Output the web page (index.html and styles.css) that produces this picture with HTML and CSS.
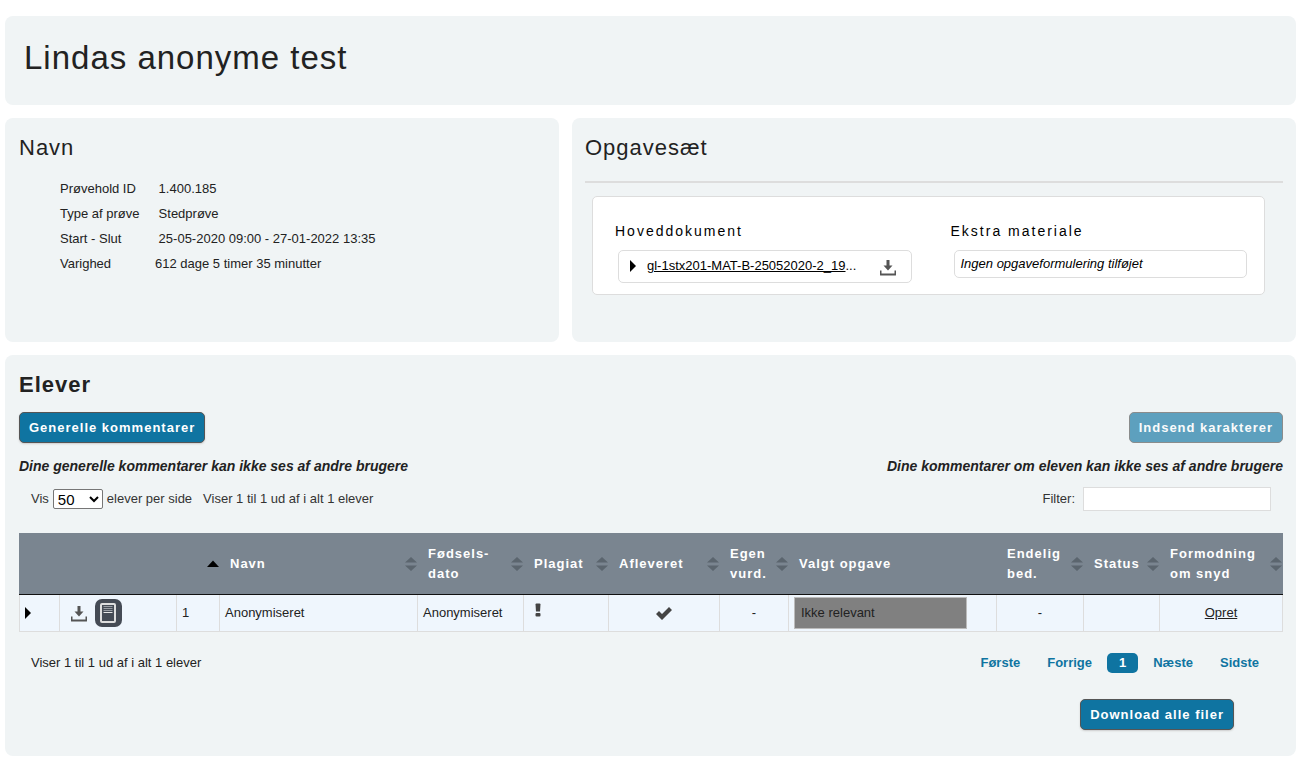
FILE: index.html
```html
<!DOCTYPE html>
<html lang="da">
<head>
<meta charset="utf-8">
<title>Lindas anonyme test</title>
<link rel="stylesheet" href="styles.css">
</head>
<body>
<svg class="sprite" width="0" height="0" aria-hidden="true">
  <symbol id="download" viewBox="0 0 16 16"><path d="M6.500 0h3v5.500H12.500L8 10.500 3.500 5.500h3z"/><path d="M0 10.500h1.500v3h13v-3H16V15q0 .5-.5.5H.5Q0 15.500 0 15z"/></symbol>
  <symbol id="expand" viewBox="0 0 6 12"><path d="M0 0l6 6-6 6z"/></symbol>
  <symbol id="sort" viewBox="0 0 12 16"><path d="M0 6.500L6 1l6 5.500zM0 9.500h12L6 15z"/></symbol>
  <symbol id="ascending" viewBox="0 0 12 16"><path d="M0 11l6-6.500L12 11z"/></symbol>
</svg>
<main class="page">
  <header class="panel title-panel"><h1 class="title">Lindas anonyme test</h1></header>

  <div class="columns">
    <section class="panel">
      <h2 class="heading">Navn</h2>
      <dl class="facts">
        <dt>Prøvehold ID</dt><dd>&nbsp;1.400.185</dd>
        <dt>Type af prøve</dt><dd>&nbsp;Stedprøve</dd>
        <dt>Start - Slut</dt><dd>&nbsp;25-05-2020 09:00 - 27-01-2022 13:35</dd>
        <dt>Varighed</dt><dd>612 dage 5 timer 35 minutter</dd>
      </dl>
    </section>
    <section class="panel">
      <h2 class="heading">Opgavesæt</h2>
      <div class="documents">
        <div>
          <h3 class="subheading">Hoveddokument</h3>
          <div class="box file">
            <svg class="expand"><use href="#expand"/></svg>
            <span class="file-name"><a href="#">gl-1stx201-MAT-B-25052020-2_19</a>...</span>
            <svg class="download"><use href="#download"/></svg>
          </div>
        </div>
        <div>
          <h3 class="subheading">Ekstra materiale</h3>
          <div class="box note">Ingen opgaveformulering tilføjet</div>
        </div>
      </div>
    </section>
  </div>

  <section class="panel">
    <h2 class="heading strong">Elever</h2>
    <div class="bar">
      <button class="button" type="button">Generelle kommentarer</button>
      <button class="button" type="button" disabled>Indsend karakterer</button>
    </div>
    <div class="bar hints">
      <p>Dine generelle kommentarer kan ikke ses af andre brugere</p>
      <p>Dine kommentarer om eleven kan ikke ses af andre brugere</p>
    </div>
    <div class="bar tools">
      <div class="length">
        <label for="length">Vis</label>
        <select id="length"><option>50</option></select>
        <span>elever per side</span>
        <span class="count">Viser 1 til 1 ud af i alt 1 elever</span>
      </div>
      <div class="filter"><label for="filter">Filter:</label><input id="filter" type="text"></div>
    </div>

    <table class="students">
      <colgroup>
        <col class="c-expand"><col class="c-actions"><col class="c-number"><col class="c-name"><col class="c-birth"><col class="c-plagiarism"><col class="c-handed"><col class="c-own"><col class="c-task"><col class="c-final"><col class="c-status"><col class="c-cheat">
      </colgroup>
      <thead>
        <tr>
          <th></th>
          <th></th>
          <th><div class="head"><span></span><svg class="sort active"><use href="#ascending"/></svg></div></th>
          <th><div class="head">Navn<svg class="sort"><use href="#sort"/></svg></div></th>
          <th><div class="head">Fødsels-<br>dato<svg class="sort"><use href="#sort"/></svg></div></th>
          <th><div class="head">Plagiat<svg class="sort"><use href="#sort"/></svg></div></th>
          <th><div class="head">Afleveret<svg class="sort"><use href="#sort"/></svg></div></th>
          <th><div class="head">Egen<br>vurd.<svg class="sort"><use href="#sort"/></svg></div></th>
          <th><div class="head">Valgt opgave</div></th>
          <th><div class="head">Endelig<br>bed.<svg class="sort"><use href="#sort"/></svg></div></th>
          <th><div class="head">Status<svg class="sort"><use href="#sort"/></svg></div></th>
          <th><div class="head">Formodning<br>om snyd<svg class="sort"><use href="#sort"/></svg></div></th>
        </tr>
      </thead>
      <tbody>
        <tr>
          <td><svg class="expand"><use href="#expand"/></svg></td>
          <td>
            <div class="actions">
              <svg class="download"><use href="#download"/></svg>
              <svg class="book" viewBox="0 0 27 28">
                <rect width="27" height="28" rx="7" fill="#454b55"/>
                <rect x="6" y="5" width="14" height="18" rx="1" fill="none" stroke="#dedede" stroke-width="2"/>
                <path d="M8.500 7.500h9M8.500 9.500h9M8.500 11.500h9" stroke="#9a9ea4"/>
                <path d="M8.500 13.500h9" stroke="#e8e8e8"/>
              </svg>
            </div>
          </td>
          <td>1</td>
          <td>Anonymiseret</td>
          <td>Anonymiseret</td>
          <td class="top"><svg class="alert" viewBox="0 0 6 14"><path d="M.5 1.500Q.5.500 1.500.500h3q1 0 1 1L5 8.500H1z"/><rect x=".5" y="10" width="5" height="3.500" rx="1"/></svg></td>
          <td class="center"><svg class="check" viewBox="0 0 16 13"><path d="M0 7l3-3 3 3 7-7 3 3L6 13z"/></svg></td>
          <td class="center">-</td>
          <td><div class="task">Ikke relevant</div></td>
          <td class="center">-</td>
          <td></td>
          <td class="center"><a href="#">Opret</a></td>
        </tr>
      </tbody>
    </table>

    <div class="bar footer">
      <span>Viser 1 til 1 ud af i alt 1 elever</span>
      <nav class="pager">
        <a href="#">Første</a><a href="#">Forrige</a><a class="current" href="#">1</a><a href="#">Næste</a><a href="#">Sidste</a>
      </nav>
    </div>
    <div class="download-all"><button class="button" type="button">Download alle filer</button></div>
  </section>
</main>
</body>
</html>
```
FILE: styles.css
```css
* { box-sizing: border-box; }
body { margin: 0; background: #fff; color: #222; font: 13px/20px "Liberation Sans", Arial, sans-serif; }
h1, h2, h3, p, dl, dd { margin: 0; }
a { color: inherit; }
svg { display: block; flex: none; }
.sprite { position: absolute; }

.page { display: flex; flex-direction: column; gap: 13px; padding: 16px 11px 9px 5px; }
.panel { min-width: 0; padding: 15px 13px 26px 14px; border-radius: 8px; background: #f0f4f5; }
.title-panel { padding: 22px 20px 27px 19px; }
.title { font-size: 33px; line-height: 40px; font-weight: 400; letter-spacing: 1px; }
.columns { display: grid; grid-template-columns: 554fr 724fr; gap: 13px; }
.columns .panel { padding-left: 13px; padding-bottom: 47px; }
.columns .panel:first-child { padding-left: 14px; }
.heading { font-size: 22px; line-height: 30px; font-weight: 400; letter-spacing: 1px; }
.strong { font-weight: 700; }

.facts { display: grid; grid-template-columns: 95px 1fr; margin: 13px 0 0 41px; line-height: 25px; }

.documents { display: grid; grid-template-columns: 1fr 1fr; margin: 33px 18px 0 7px; padding: 24px 17px 11px 22px; gap: 39px; border: 1px solid #ddd; border-radius: 5px; background: #fff; color: #000; position: relative; }
.documents::before { content: ""; position: absolute; top: -16px; left: -8px; right: -19px; height: 2px; background: #ddd; }
.subheading { font-size: 14px; line-height: 20px; font-weight: 400; letter-spacing: 2px; }
.box { margin: 9px 0 0 3px; border: 1px solid #ddd; border-radius: 5px; }
.file { display: flex; align-items: center; height: 33px; padding: 0 15px 2px 11px; }
.file-name { flex: 1; margin-left: 11px; white-space: nowrap; }
.file .download { margin-top: 4px; }
.note { padding: 3px 6px; font-style: italic; }

.expand { width: 6px; height: 12px; fill: #000; }
.download { width: 16px; height: 16px; fill: #555; }

.bar { display: flex; justify-content: space-between; align-items: center; }
.button { height: 31px; margin: 0; padding: 0 9px; border: 1px solid #555; border-radius: 5px; background: #0f74a1; color: #fff; font: bold 13px/20px "Liberation Sans", Arial, sans-serif; letter-spacing: 1px; box-shadow: 0 1px 2px #ccc; }
.button:disabled { opacity: .65; box-shadow: none; }
.heading + .bar { margin-top: 12px; }
.hints { margin-top: 13px; font-size: 14px; font-style: italic; font-weight: 700; }
.tools { margin-top: 11px; padding: 0 12px; color: #333; }
.length { display: flex; align-items: center; gap: 4px; }
.length select { width: 50px; height: 20px; border: 1px solid #767676; border-radius: 2px; background: #fff; color: #000; font: 15px "Liberation Sans", Arial, sans-serif; }
.count { margin-left: 7px; }
.filter { display: flex; align-items: center; gap: 8px; }
.filter input { width: 188px; height: 24px; border: 1px solid #ddd; background: #fff; }

.students { width: 100%; margin-top: 22px; table-layout: fixed; border-collapse: separate; border-spacing: 0; }
.c-expand { width: 41px; }
.c-actions { width: 117px; }
.c-number { width: 43px; }
.c-name { width: 198px; }
.c-birth { width: 106px; }
.c-plagiarism { width: 85px; }
.c-handed { width: 111px; }
.c-own { width: 69px; }
.c-task { width: 208px; }
.c-final { width: 87px; }
.c-status { width: 76px; }
.c-cheat { width: 123px; }
.students th { height: 62px; padding: 1px 0 0 10px; border-bottom: 1px solid #111; background: #7a8590; color: #fff; text-align: left; letter-spacing: 1px; white-space: nowrap; }
.head { position: relative; }
.sort { position: absolute; top: 50%; right: 1px; width: 12px; height: 16px; margin-top: -8px; fill: #5b656e; }
.active { fill: #000; }
.students td { height: 37px; padding: 0 5px; border: 1px solid #ddd; border-width: 0 1px 1px 0; background: #eff6fd; }
.students td:first-child { border-left-width: 1px; }
.students .center { text-align: center; }
.students .top { padding: 8px 11px 0; vertical-align: top; }
.actions { display: flex; align-items: center; gap: 8px; padding-left: 6px; }
.actions .download { margin-top: 2px; }
.book { width: 27px; height: 28px; }
.alert { width: 6px; height: 14px; fill: #444; }
.check { display: inline-block; width: 16px; height: 13px; fill: #444; vertical-align: middle; }
.task { width: 173px; padding: 5px 6px; border: 1px solid #bbb; background: #808080; }

.footer { margin-top: 21px; padding: 0 12px; }
.pager { display: flex; align-items: center; gap: 3px; color: #0f74a1; font-weight: 700; }
.pager a { padding: 0 12px; text-decoration: none; }
.pager .current { border-radius: 5px; background: #0f74a1; color: #fff; }
.download-all { display: flex; justify-content: flex-end; margin-top: 26px; padding-right: 49px; }
```
